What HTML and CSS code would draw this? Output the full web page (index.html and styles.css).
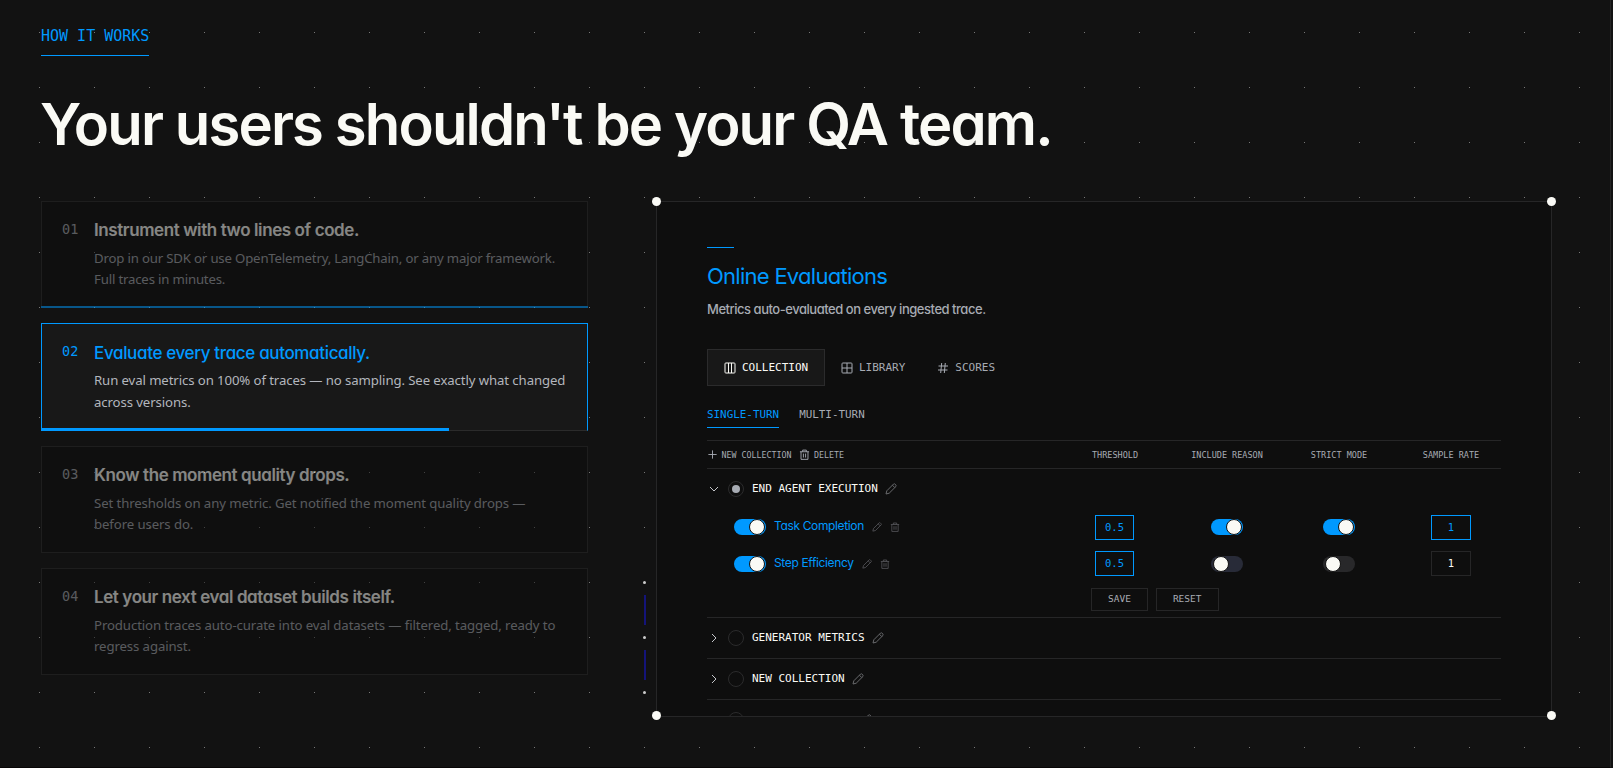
FILE: index.html
```
<!DOCTYPE html>
<html lang="en">
  <head>
    <meta charset="UTF-8" />
    <meta name="viewport" content="width=device-width, initial-scale=1.0" />
    <title>How it works</title>
    <link rel="stylesheet" href="styles.css">
  </head>
  <body>
    <svg class="sprite">
      <symbol id="columns" viewBox="0 0 12 12"><rect x="1" y="1" width="10" height="10" rx="0.8" /><path d="M4.500 1v10M7.500 1v10" /></symbol>
      <symbol id="table" viewBox="0 0 12 12"><rect x="1" y="1" width="10" height="10" rx="0.8" /><path d="M6 1v10M1 6h10" /></symbol>
      <symbol id="hash" viewBox="0 0 12 12"><path d="M1.500 4h9.500M1 8h9.500M4.700 1 3.700 11M8.300 1 7.300 11" /></symbol>
      <symbol id="plus" viewBox="0 0 12 12"><path d="M6 1.500v9M1.500 6h9" /></symbol>
      <symbol id="trash" viewBox="0 0 12 12"><path d="M1 3h10M4 3V1.200h4V3M2.200 3v8.300h7.600V3M4.800 5v4.300M7.200 5v4.300" /></symbol>
      <symbol id="pencil" viewBox="0 0 12 12"><path d="M1 11l.8-3.200L8.600 1q.6-.5 1.200 0l1.200 1.200q.5.600 0 1.200L4.200 10.200zM7.400 2.200l2.400 2.400" /></symbol>
      <symbol id="down" viewBox="0 0 12 12"><path d="M2 4l4 4 4-4" /></symbol>
      <symbol id="right" viewBox="0 0 12 12"><path d="M4 2l4 4-4 4" /></symbol>
    </svg>
    <section class="how">
      <div class="dots"></div>
      <span class="label">HOW IT WORKS</span>
      <h1>Your users shouldn't be your QA team.</h1>
      <div class="columns">
        <div class="steps">
          <div class="step done">
            <span class="num">01</span>
            <div>
              <h2>Instrument with two lines of code.</h2>
              <p>Drop in our SDK or use OpenTelemetry, LangChain, or any major framework.<br />Full traces in minutes.</p>
            </div>
            <i class="bar"></i>
          </div>
          <div class="step active">
            <span class="num">02</span>
            <div>
              <h2>Evaluate every trace automatically.</h2>
              <p>Run eval metrics on 100% of traces — no sampling. See exactly what changed<br />across versions.</p>
            </div>
            <i class="bar"></i>
          </div>
          <div class="step">
            <span class="num">03</span>
            <div>
              <h2>Know the moment quality drops.</h2>
              <p>Set thresholds on any metric. Get notified the moment quality drops —<br />before users do.</p>
            </div>
          </div>
          <div class="step">
            <span class="num">04</span>
            <div>
              <h2>Let your next eval dataset builds itself.</h2>
              <p>Production traces auto-curate into eval datasets — filtered, tagged, ready to<br />regress against.</p>
            </div>
          </div>
        </div>

        <div class="panel">
          <i class="corner tl"></i><i class="corner tr"></i><i class="corner bl"></i><i class="corner br"></i>
          <div class="rail"><b></b><i></i><b></b><i></i><b></b></div>
          <div class="panel-body">
            <div class="accent"></div>
            <h3>Online Evaluations</h3>
            <p class="sub">Metrics auto-evaluated on every ingested trace.</p>
            <div class="tabs">
              <span class="tab on"><svg><use href="#columns" /></svg>COLLECTION</span>
              <span class="tab"><svg><use href="#table" /></svg>LIBRARY</span>
              <span class="tab"><svg><use href="#hash" /></svg>SCORES</span>
            </div>
            <div class="turns">
              <span class="turn on">SINGLE-TURN</span>
              <span class="turn">MULTI-TURN</span>
            </div>
            <div class="row head">
              <div class="actions">
                <svg><use href="#plus" /></svg><span>NEW COLLECTION</span>
                <svg class="bin"><use href="#trash" /></svg><span>DELETE</span>
              </div>
              <span>THRESHOLD</span>
              <span>INCLUDE REASON</span>
              <span>STRICT MODE</span>
              <span>SAMPLE RATE</span>
            </div>
            <div class="group">
              <div class="group-name first"><svg class="chev"><use href="#down" /></svg><i class="radio on"></i>END AGENT EXECUTION<svg class="pen"><use href="#pencil" /></svg></div>
              <div class="row metric">
                <div class="metric-name"><i class="toggle on"></i><span>Task Completion</span><svg><use href="#pencil" /></svg><svg><use href="#trash" /></svg></div>
                <span class="field on">0.5</span>
                <i class="toggle on"></i>
                <i class="toggle on"></i>
                <span class="field rate on">1</span>
              </div>
              <div class="row metric">
                <div class="metric-name"><i class="toggle on"></i><span>Step Efficiency</span><svg><use href="#pencil" /></svg><svg><use href="#trash" /></svg></div>
                <span class="field on">0.5</span>
                <i class="toggle mixed"></i>
                <i class="toggle"></i>
                <span class="field rate">1</span>
              </div>
              <div class="buttons"><span class="btn">SAVE</span><span class="btn">RESET</span></div>
            </div>
            <div class="group-name line"><svg class="chev"><use href="#right" /></svg><i class="radio"></i>GENERATOR METRICS<svg class="pen"><use href="#pencil" /></svg></div>
            <div class="group-name line"><svg class="chev"><use href="#right" /></svg><i class="radio"></i>NEW COLLECTION<svg class="pen"><use href="#pencil" /></svg></div>
            <div class="group-name line"><svg class="chev"></svg><i class="radio"></i><span class="blank"></span><svg class="pen"><use href="#pencil" /></svg></div>
          </div>
        </div>
      </div>
    </section>
  </body>
</html>
```

FILE: styles.css
```
:root {
  --bg: #121212;
  --panel: #0e0e0e;
  --line: #262627;
  --blue: #0099ff;
  --white: #fafaf5;
  --grey: #a7abb3;
  --mono: "DejaVu Sans Mono", "Liberation Mono", monospace;
  --sans: Inter, "Liberation Sans", sans-serif;
  --text: "Noto Sans", "Open Sans", sans-serif;
}

* {
  box-sizing: border-box;
}

body {
  margin: 0;
  background: var(--bg);
  color: var(--white);
  font-family: var(--sans);
  font-feature-settings: "cv11";
}

h1,
h2,
h3,
p {
  margin: 0;
}

i {
  font-style: normal;
}

svg {
  width: 12px;
  height: 12px;
  flex: none;
  fill: none;
  stroke: currentColor;
  stroke-width: 1;
}

.sprite {
  position: absolute;
  width: 0;
  height: 0;
}

.how {
  position: relative;
  width: 1611px;
  height: 768px;
  padding: 25px 0 0 41px;
  border-right: 1px solid #242424;
  border-bottom: 1px solid #080606;
  overflow: hidden;
}

/* 1px dots every 55px */
.dots {
  position: absolute;
  inset: 32px 30px 0 39px;
  background: conic-gradient(from 270deg at 1px 1px, #777 90deg, transparent 0) 0 0 / 55px 55px;
}

.label {
  position: relative;
  display: block;
  width: 108px;
  height: 31px;
  border-bottom: 1px solid var(--blue);
  color: var(--blue);
  font: 15px/22px var(--mono);
  white-space: nowrap;
}

h1 {
  position: relative;
  margin: 36px 0 45px -1px;
  font-size: 58px;
  line-height: 64px;
  font-weight: 560;
  letter-spacing: -1.86px;
  white-space: nowrap;
}

.columns {
  position: relative;
  display: flex;
  gap: 68px;
}

.steps {
  width: 547px;
  display: flex;
  flex-direction: column;
  gap: 15px;
}

.step {
  position: relative;
  display: flex;
  height: 107.33px;
  padding: 16px 0 0 20px;
  border: 1px solid #2b2b2b;
  background: var(--panel);
  opacity: 0.5;
  white-space: nowrap;
}

.num {
  flex: none;
  width: 32px;
  color: #a0a3aa;
  font: 13.5px/22px var(--mono);
}

h2 {
  font-size: 17px;
  line-height: 24px;
  font-weight: 600;
  letter-spacing: -0.4px;
}

.step p {
  margin-top: 6px;
  color: #a0a3aa;
  font: 13.2px/21.5px var(--text);
  letter-spacing: -0.1px;
}

.step.done p {
  margin-top: 5.5px;
  letter-spacing: -0.17px;
}

.bar {
  position: absolute;
  left: -1px;
  right: -1px;
  bottom: -1px;
  height: 2px;
  background: var(--blue);
}

.step.active {
  opacity: 1;
  background: #181818;
  border-color: var(--blue);
  border-bottom-color: #2b2b2b;
}

.active .num,
.active h2 {
  color: var(--blue);
}

.active h2 {
  margin-top: 1px;
  font-weight: 500;
  letter-spacing: -0.35px;
}

.step.active p {
  margin-top: 5px;
  color: #b3b6bd;
}

.active .bar {
  right: auto;
  width: 408px;
  height: 3px;
}

.panel {
  position: relative;
  width: 896px;
  height: 516px;
  border: 1px solid var(--line);
  background: var(--panel);
}

.corner {
  position: absolute;
  width: 9px;
  height: 9px;
  border-radius: 50%;
  background: var(--white);
}

.tl { left: -5px; top: -5px; }
.tr { right: -5px; top: -5px; }
.bl { left: -5px; bottom: -4px; }
.br { right: -5px; bottom: -4px; }

.rail {
  position: absolute;
  left: -14px;
  top: 379px;
  width: 3px;
  display: flex;
  flex-direction: column;
  align-items: flex-end;
  gap: 11px;
}

.rail b {
  width: 3px;
  height: 3px;
  border-radius: 50%;
  background: #ccc;
}

.rail i {
  width: 2px;
  height: 30px;
  background: #14147a;
}

.panel-body {
  height: 514px;
  padding: 45px 50px 0;
  overflow: hidden;
}

.accent {
  width: 27px;
  height: 1px;
  background: var(--blue);
}

h3 {
  margin-top: 13px;
  color: var(--blue);
  font-size: 22px;
  line-height: 30px;
  font-weight: 400;
  letter-spacing: -0.73px;
}

.sub {
  margin-top: 8px;
  color: var(--grey);
  font-size: 13px;
  line-height: 20px;
  font-weight: 500;
  letter-spacing: -0.47px;
}

.tabs {
  display: flex;
  margin-top: 30px;
  height: 37px;
}

.tab {
  display: flex;
  align-items: center;
  padding: 0 15px;
  gap: 6px;
  border: 1px solid transparent;
  color: var(--grey);
  font: 11px/16px var(--mono);
}

.tab.on {
  width: 118px;
  padding: 0 16px;
  border-color: #2b2b2c;
  background: #181818;
  color: var(--white);
}

.turns {
  display: flex;
  gap: 20px;
  margin-top: 21px;
  height: 33px;
}

.turn {
  height: 21px;
  color: var(--grey);
  font: 10.9px/16px var(--mono);
}

.turn.on {
  border-bottom: 1px solid var(--blue);
  color: var(--blue);
}

.row {
  display: grid;
  grid-template-columns: 1fr repeat(4, 100px);
  column-gap: 12px;
  align-items: center;
  justify-items: center;
}

.row > :first-child {
  justify-self: start;
}

.head {
  height: 29px;
  border-top: 1px solid var(--line);
  border-bottom: 1px solid var(--line);
  color: var(--grey);
  font: 8.5px/12px var(--mono);
}

.actions {
  display: flex;
  align-items: center;
  font-size: 8.3px;
}

.actions svg {
  width: 11px;
  height: 11px;
  margin-right: 3.5px;
}

.actions .bin {
  margin-left: 8px;
}

.group {
  height: 148px;
}

.group-name {
  display: flex;
  align-items: center;
  height: 41px;
  font: 11px/16px var(--mono);
}

.group-name.first {
  height: 39px;
}

.chev {
  margin: 0 8px 0 1px;
  color: #c4c6ca;
}

.pen {
  margin-left: 7px;
  color: #68696c;
}

.line {
  border-top: 1px solid var(--line);
}

.blank {
  width: 101px;
}

.radio {
  display: flex;
  width: 16px;
  height: 16px;
  margin-right: 8px;
  border: 1px solid #2b2b2c;
  border-radius: 50%;
}

.radio.on::after {
  content: "";
  width: 8px;
  height: 8px;
  margin: 3px;
  border-radius: 50%;
  background: #a7abb3;
}

.metric {
  height: 36.5px;
}

.first + .metric {
  margin-top: 1px;
}

.metric-name {
  display: flex;
  align-items: center;
  padding-left: 27px;
  color: var(--blue);
  font-size: 12px;
  line-height: 16px;
  letter-spacing: -0.36px;
}

.metric-name span {
  margin: -2px 8px 0;
}

.metric-name svg {
  width: 10px;
  height: 10px;
  margin-right: 8px;
  color: #55565a;
}

.toggle {
  display: flex;
  align-items: center;
  width: 32px;
  height: 16px;
  padding: 0 2px;
  border-radius: 8px;
  background: #28282a;
}

.toggle::after {
  content: "";
  width: 14px;
  height: 14px;
  border: 1px solid #121212;
  border-radius: 50%;
  background: var(--white);
}

.toggle.mixed {
  background: #282b38;
}

.toggle.on {
  justify-content: flex-end;
  padding: 0 1px;
  background: var(--blue);
}

.field {
  width: 39px;
  height: 25px;
  margin-right: 1px;
  border: 1px solid var(--line);
  font: 10.5px/23px var(--mono);
  text-align: center;
}

.rate {
  width: 40px;
  margin-right: 0;
}

.field.on {
  border-color: var(--blue);
  color: var(--blue);
}

.buttons {
  display: flex;
  gap: 8px;
  margin: 6px 0 0 384px;
}

.btn {
  height: 23px;
  padding: 0 16px;
  border: 1px solid var(--line);
  color: var(--grey);
  font: 9.5px/20px var(--mono);
}
```
